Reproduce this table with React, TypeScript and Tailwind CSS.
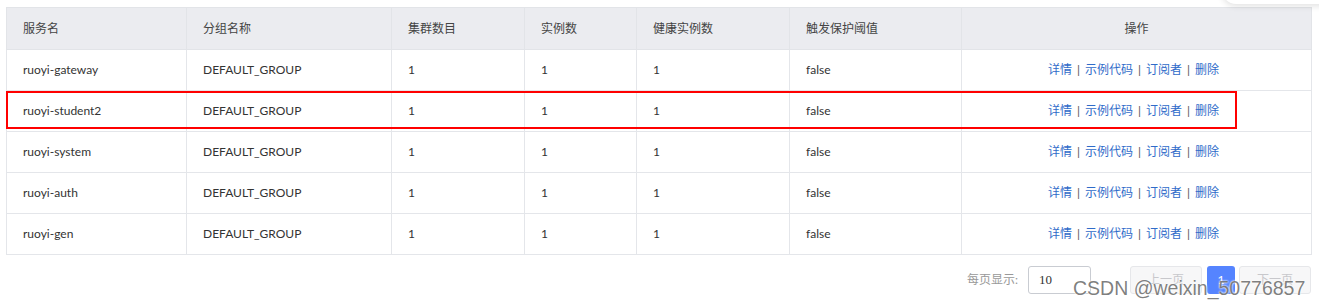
import React from "react";

const rows = [
  "ruoyi-gateway",
  "ruoyi-student2",
  "ruoyi-system",
  "ruoyi-auth",
  "ruoyi-gen",
];

const cols = [
  { label: "服务名", w: 180 },
  { label: "分组名称", w: 205 },
  { label: "集群数目", w: 133 },
  { label: "实例数", w: 112 },
  { label: "健康实例数", w: 153 },
  { label: "触发保护阈值", w: 172 },
  { label: "操作", w: 350 },
];

const font = { fontFamily: 'Lato, "Noto Sans CJK SC", sans-serif' };

function Ops() {
  return (
    <div className="flex items-center justify-center text-[#2f6bc9] pr-[6px]">
      <span>详情</span>
      <span className="mx-[5px] text-[#555]">|</span>
      <span>示例代码</span>
      <span className="mx-[5px] text-[#555]">|</span>
      <span>订阅者</span>
      <span className="mx-[5px] text-[#555]">|</span>
      <span>删除</span>
    </div>
  );
}

export default function App() {
  return (
    <div className="relative w-[1319px] h-[308px] bg-white overflow-hidden text-[12px]" style={font}>
      <div className="absolute left-[1222px] top-[-44px] w-[130px] h-[48px] rounded-[14px] bg-white shadow-[0_2px_6px_rgba(0,0,0,0.12)]" />
      <div className="pt-[7px] pl-[6px]">
        <table className="border-collapse table-fixed w-[1305px]">
          <colgroup>
            {cols.map((c) => (
              <col key={c.label} style={{ width: c.w }} />
            ))}
          </colgroup>
          <thead>
            <tr className="h-[42px] bg-[#ebecf0]">
              {cols.map((c, i) => (
                <th
                  key={c.label}
                  className={`border border-[#e2e4e8] px-[16px] font-normal text-[#444] ${
                    i === 6 ? "text-center" : "text-left"
                  }`}
                >
                  {c.label}
                </th>
              ))}
            </tr>
          </thead>
          <tbody>
            {rows.map((r) => (
              <tr key={r} className="h-[41px] text-[#333]">
                <td className="border border-[#e4e6ea] px-[16px]">{r}</td>
                <td className="border border-[#e4e6ea] px-[16px]">DEFAULT_GROUP</td>
                <td className="border border-[#e4e6ea] px-[16px]">1</td>
                <td className="border border-[#e4e6ea] px-[16px]">1</td>
                <td className="border border-[#e4e6ea] px-[16px]">1</td>
                <td className="border border-[#e4e6ea] px-[16px]">false</td>
                <td className="border border-[#e4e6ea] px-[16px]">
                  <Ops />
                </td>
              </tr>
            ))}
          </tbody>
        </table>
        <div className="flex items-center justify-end w-[1305px] mt-[11px]">
          <span className="text-[#999] mr-[10px]">每页显示:</span>
          <div className="w-[63px] h-[28px] border border-[#c9ccd2] rounded-[3px] flex items-center pl-[10px] text-[#333] text-[13px]" style={{ fontFamily: '"Liberation Serif", serif' }}>
            10
          </div>
          <div className="ml-[39px] w-[72px] h-[28px] border border-[#e6e7ea] bg-[#f7f7f8] rounded-[3px] flex items-center justify-center text-[#c8c8cc]">
            上一页
          </div>
          <div className="ml-[5px] w-[28px] h-[28px] bg-[#5584ff] rounded-[3px] flex items-center justify-center text-white">
            1
          </div>
          <div className="ml-[4px] w-[72px] h-[28px] border border-[#e6e7ea] bg-[#f7f7f8] rounded-[3px] flex items-center justify-center text-[#c8c8cc]">
            下一页
          </div>
        </div>
      </div>
      <div className="absolute left-[6px] top-[91px] w-[1231px] h-[38px] border-2 border-[#ff0000] pointer-events-none" />
      <div
        className="absolute left-[1073px] top-[277px] whitespace-nowrap text-[19.5px] leading-[22px] text-[#555]/75"
        style={{ fontFamily: '"Liberation Sans", Arial, sans-serif', textShadow: "0 0 2px #fff, 0 0 2px #fff" }}
      >
        CSDN @weixin_50776857
      </div>
    </div>
  );
}
